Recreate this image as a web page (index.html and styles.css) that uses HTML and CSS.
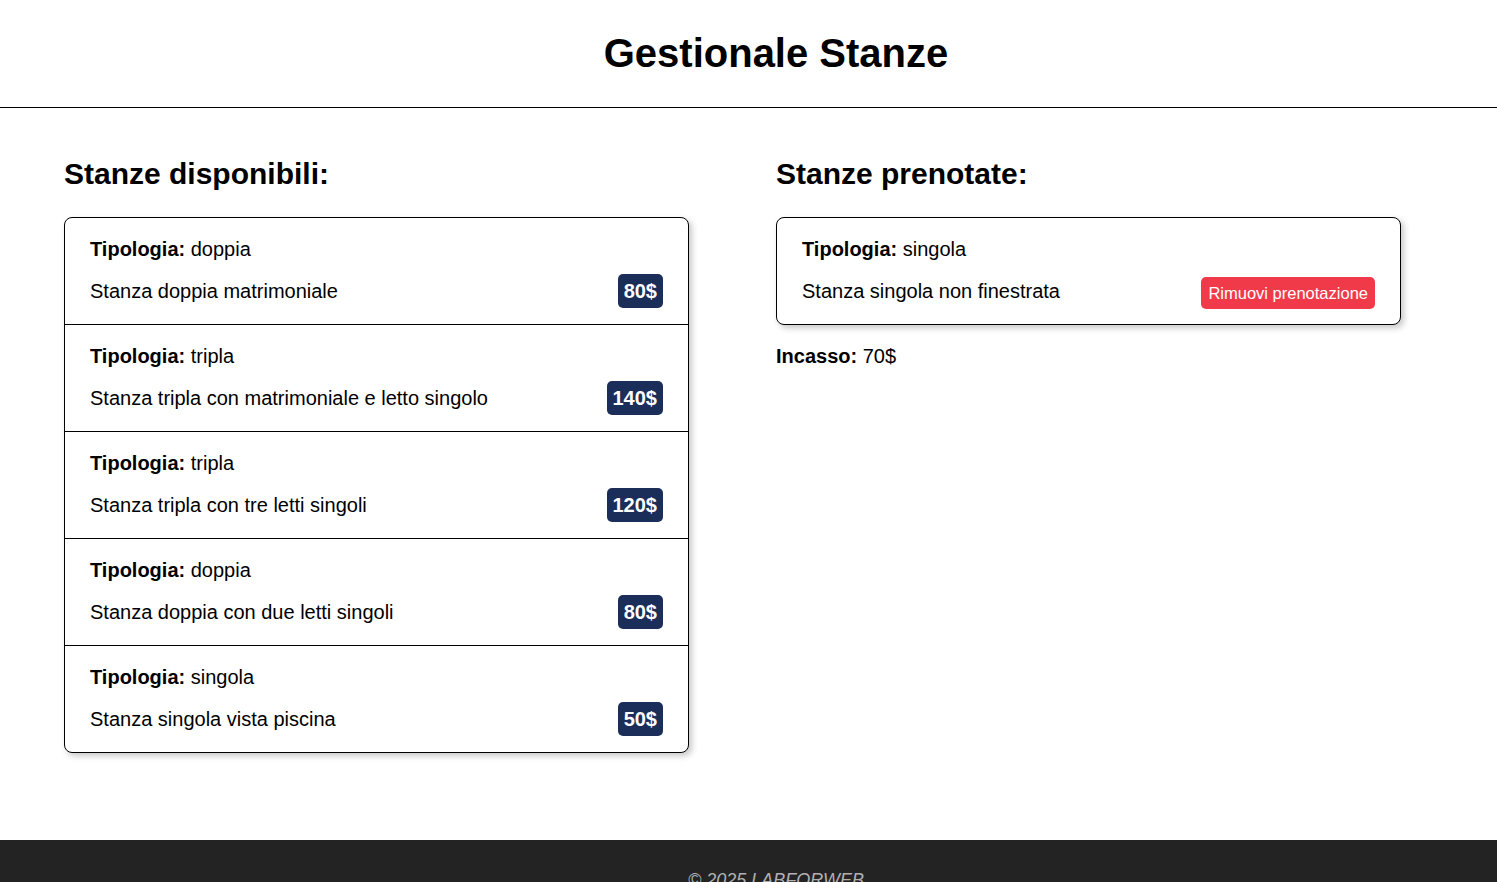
FILE: index.html
```html
<!DOCTYPE html>
<html lang="it">
<head>
<meta charset="utf-8">
<title>Gestionale Stanze</title>
<link rel="stylesheet" href="styles.css">
</head>
<body>
<header class="site-header">
  <h1 class="site-title">Gestionale Stanze</h1>
</header>
<main class="main">
  <section class="column">
    <h2 class="column-title">Stanze disponibili:</h2>
    <ul class="room-list">
      <li class="room">
        <p class="room-type"><strong>Tipologia:</strong> doppia</p>
        <div class="room-row"><span>Stanza doppia matrimoniale</span><span class="price">80$</span></div>
      </li>
      <li class="room">
        <p class="room-type"><strong>Tipologia:</strong> tripla</p>
        <div class="room-row"><span>Stanza tripla con matrimoniale e letto singolo</span><span class="price">140$</span></div>
      </li>
      <li class="room">
        <p class="room-type"><strong>Tipologia:</strong> tripla</p>
        <div class="room-row"><span>Stanza tripla con tre letti singoli</span><span class="price">120$</span></div>
      </li>
      <li class="room">
        <p class="room-type"><strong>Tipologia:</strong> doppia</p>
        <div class="room-row"><span>Stanza doppia con due letti singoli</span><span class="price">80$</span></div>
      </li>
      <li class="room">
        <p class="room-type"><strong>Tipologia:</strong> singola</p>
        <div class="room-row"><span>Stanza singola vista piscina</span><span class="price">50$</span></div>
      </li>
    </ul>
  </section>
  <section class="column">
    <h2 class="column-title">Stanze prenotate:</h2>
    <ul class="room-list">
      <li class="room">
        <p class="room-type"><strong>Tipologia:</strong> singola</p>
        <div class="room-row"><span>Stanza singola non finestrata</span><button class="remove-btn" type="button">Rimuovi prenotazione</button></div>
      </li>
    </ul>
    <p class="income"><strong>Incasso:</strong> 70$</p>
  </section>
</main>
<footer class="site-footer">
  <p class="footer-text">© 2025 LABFORWEB</p>
</footer>
</body>
</html>
```
FILE: styles.css
```css
* { box-sizing: border-box; }

html, body {
  margin: 0;
  padding: 0;
  background: #ffffff;
  color: #000000;
  font-family: "Liberation Sans", Arial, sans-serif;
}

body {
  min-width: 1552px;
}

.site-header {
  padding: 29px 0 30px;
  border-bottom: 1px solid #000000;
  text-align: center;
}

.site-title {
  margin: 0;
  font-size: 40px;
  line-height: 48px;
  font-weight: 700;
}

.main {
  display: grid;
  grid-template-columns: 625px 625px;
  column-gap: 87px;
  padding: 48px 64px 87px;
  align-items: start;
}

.column-title {
  margin: 0 0 25px;
  font-size: 30px;
  line-height: 36px;
  font-weight: 700;
}

.room-list {
  list-style: none;
  margin: 0;
  padding: 0;
  border: 1px solid #000000;
  border-radius: 8px;
  box-shadow: 3px 3px 6px rgba(0, 0, 0, 0.22);
  background: #ffffff;
}

.room {
  padding: 16px 25px;
  border-bottom: 1px solid #000000;
  font-size: 20px;
}

.room:last-child {
  border-bottom: none;
}

.room-type {
  margin: 0 0 10px;
  line-height: 30px;
}

.room-row {
  display: flex;
  align-items: center;
  justify-content: space-between;
  height: 34px;
  line-height: 24px;
}

.price {
  display: inline-block;
  background: #1b2e5a;
  color: #ffffff;
  font-weight: 700;
  font-size: 20px;
  line-height: 24px;
  padding: 5px 6px;
  border-radius: 5px;
}

.remove-btn {
  font-family: "Liberation Sans", Arial, sans-serif;
  background: #f03a4a;
  color: #ffffff;
  border: none;
  border-radius: 5px;
  font-size: 16.5px;
  line-height: 20px;
  height: 32px;
  padding: 0 7px;
  position: relative;
  top: 2px;
}

.income {
  margin: 16px 0 0;
  font-size: 20px;
  line-height: 30px;
}

.site-footer {
  background: #232323;
  padding: 27px 0 20px;
  text-align: center;
}

.footer-text {
  margin: 0;
  color: #b0b0b0;
  font-style: italic;
  font-size: 18px;
  line-height: 27px;
}
```
